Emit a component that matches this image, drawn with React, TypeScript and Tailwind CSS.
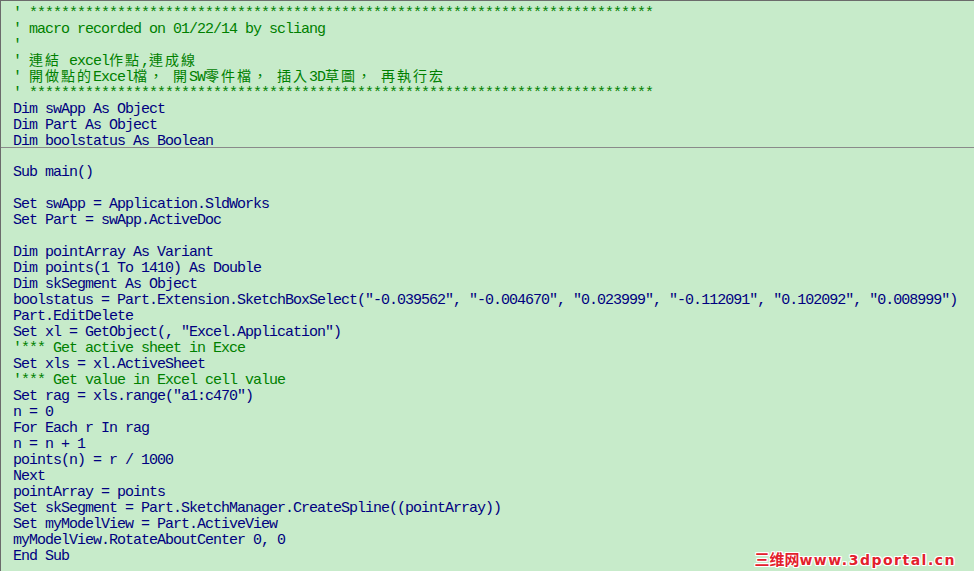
import React from 'react';

type Line = { text: string; kind: 'code' | 'comment' };

const stars = '*'.repeat(78);

// declarations section (above the gray separator)
const header: Line[] = [
  { text: "' " + stars, kind: 'comment' },
  { text: "' macro recorded on 01/22/14 by scliang", kind: 'comment' },
  { text: "'", kind: 'comment' },
  { text: "' 連結 excel作點,連成線", kind: 'comment' },
  { text: "' 開做點的Excel檔， 開SW零件檔， 插入3D草圖， 再執行宏", kind: 'comment' },
  { text: "' " + stars, kind: 'comment' },
  { text: 'Dim swApp As Object', kind: 'code' },
  { text: 'Dim Part As Object', kind: 'code' },
  { text: 'Dim boolstatus As Boolean', kind: 'code' },
];

const body: Line[] = [
  { text: '', kind: 'code' },
  { text: 'Sub main()', kind: 'code' },
  { text: '', kind: 'code' },
  { text: 'Set swApp = Application.SldWorks', kind: 'code' },
  { text: 'Set Part = swApp.ActiveDoc', kind: 'code' },
  { text: '', kind: 'code' },
  { text: 'Dim pointArray As Variant', kind: 'code' },
  { text: 'Dim points(1 To 1410) As Double', kind: 'code' },
  { text: 'Dim skSegment As Object', kind: 'code' },
  {
    text: 'boolstatus = Part.Extension.SketchBoxSelect("-0.039562", "-0.004670", "0.023999", "-0.112091", "0.102092", "0.008999")',
    kind: 'code',
  },
  { text: 'Part.EditDelete', kind: 'code' },
  { text: 'Set xl = GetObject(, "Excel.Application")', kind: 'code' },
  { text: "'*** Get active sheet in Exce", kind: 'comment' },
  { text: 'Set xls = xl.ActiveSheet', kind: 'code' },
  { text: "'*** Get value in Excel cell value", kind: 'comment' },
  { text: 'Set rag = xls.range("a1:c470")', kind: 'code' },
  { text: 'n = 0', kind: 'code' },
  { text: 'For Each r In rag', kind: 'code' },
  { text: 'n = n + 1', kind: 'code' },
  { text: 'points(n) = r / 1000', kind: 'code' },
  { text: 'Next', kind: 'code' },
  { text: 'pointArray = points', kind: 'code' },
  { text: 'Set skSegment = Part.SketchManager.CreateSpline((pointArray))', kind: 'code' },
  { text: 'Set myModelView = Part.ActiveView', kind: 'code' },
  { text: 'myModelView.RotateAboutCenter 0, 0', kind: 'code' },
  { text: 'End Sub', kind: 'code' },
];

// full-width chars take two cells, so they get their own font and spacing
function splitWide(text: string) {
  return text.split(/([\u3000-\u9fff\uff00-\uffef]+)/).filter((s) => s.length > 0);
}

function CodeLine({ line }: { line: Line }) {
  const color = line.kind === 'comment' ? 'text-[#008000]' : 'text-[#000080]';
  return (
    <div className={`h-[16px] leading-[18px] whitespace-pre ${color}`}>
      {line.text === ''
        ? ' '
        : splitWide(line.text).map((part, i) =>
            /[\u3000-\u9fff\uff00-\uffef]/.test(part) ? (
              <span
                key={i}
                className="leading-[0] font-['Noto_Sans_CJK_TC','Noto_Sans_CJK_SC',sans-serif] text-[14px] tracking-[2px]"
              >
                {part}
              </span>
            ) : (
              <span key={i}>{part}</span>
            )
          )}
    </div>
  );
}

export default function App() {
  return (
    <div className="relative h-[571px] w-[974px] overflow-hidden bg-[#c7ebca] border-t border-l border-[#6b6b6b] font-['Liberation_Mono',monospace] text-[15px] tracking-[-1px]">
      <div className="pt-[4px] pl-[12px]">
        {header.map((line, i) => (
          <CodeLine key={i} line={line} />
        ))}
      </div>
      {/* separator between declarations and procedures */}
      <div className="-mt-[2px] h-px bg-[#8a8a8a]" />
      <div className="pl-[12px]">
        {body.map((line, i) => (
          <CodeLine key={i} line={line} />
        ))}
      </div>

      {/* site watermark */}
      <div className="absolute right-[18px] bottom-[4px] font-['DejaVu_Sans',sans-serif] text-[14px] font-bold leading-none tracking-[1.5px] text-[#e3202c] [text-shadow:1px_0_0_#fff,-1px_0_0_#fff,0_1px_0_#fff,0_-1px_0_#fff,1px_1px_0_#fff,-1px_-1px_0_#fff,1px_-1px_0_#fff,-1px_1px_0_#fff]">
        <span className="font-['Noto_Sans_CJK_SC',sans-serif] tracking-[0px] text-[15px]">三维网</span>
        www.3dportal.cn
      </div>
    </div>
  );
}
